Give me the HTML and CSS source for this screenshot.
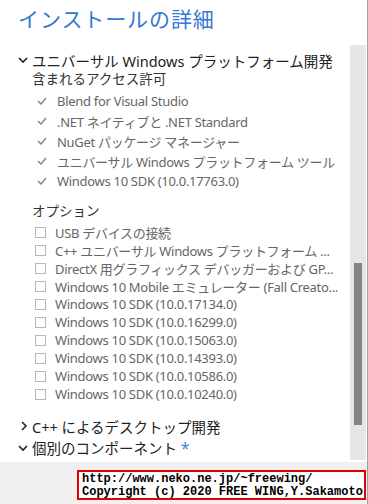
FILE: index.html
```html
<!DOCTYPE html>
<html lang="ja">
<head>
<meta charset="utf-8">
<link rel="stylesheet" href="styles.css">
</head>
<body>
<div class="window">
  <div class="main">
    <div class="content">
      <h1 class="title">インストールの詳細</h1>
      <div class="group">
        <div class="heading">
          <svg class="chev" width="10" height="8" viewBox="0 0 10 8"><path d="M1 2 L5 6 L9 2" fill="none" stroke="#222" stroke-width="1.6"/></svg>
          <span>ユニバーサル Windows プラットフォーム開発</span>
        </div>
        <div class="sub">含まれるアクセス許可</div>
        <ul class="checks">
          <li><svg class="tick" width="10" height="8" viewBox="0 0 10 8"><path d="M1 4 L4 7 L9 1" fill="none" stroke="#888" stroke-width="1.5"/></svg>Blend for Visual Studio</li>
          <li><svg class="tick" width="10" height="8" viewBox="0 0 10 8"><path d="M1 4 L4 7 L9 1" fill="none" stroke="#888" stroke-width="1.5"/></svg>.NET ネイティブと .NET Standard</li>
          <li><svg class="tick" width="10" height="8" viewBox="0 0 10 8"><path d="M1 4 L4 7 L9 1" fill="none" stroke="#888" stroke-width="1.5"/></svg>NuGet パッケージ マネージャー</li>
          <li><svg class="tick" width="10" height="8" viewBox="0 0 10 8"><path d="M1 4 L4 7 L9 1" fill="none" stroke="#888" stroke-width="1.5"/></svg>ユニバーサル Windows プラットフォーム ツール</li>
          <li><svg class="tick" width="10" height="8" viewBox="0 0 10 8"><path d="M1 4 L4 7 L9 1" fill="none" stroke="#888" stroke-width="1.5"/></svg>Windows 10 SDK (10.0.17763.0)</li>
        </ul>
        <div class="sub opt">オプション</div>
        <ul class="options">
          <li><span class="box"></span>USB デバイスの接続</li>
          <li><span class="box"></span>C++ ユニバーサル Windows プラットフォーム ...</li>
          <li><span class="box"></span>DirectX 用グラフィックス デバッガーおよび GP...</li>
          <li><span class="box"></span>Windows 10 Mobile エミュレーター (Fall Creato...</li>
          <li><span class="box"></span>Windows 10 SDK (10.0.17134.0)</li>
          <li><span class="box"></span>Windows 10 SDK (10.0.16299.0)</li>
          <li><span class="box"></span>Windows 10 SDK (10.0.15063.0)</li>
          <li><span class="box"></span>Windows 10 SDK (10.0.14393.0)</li>
          <li><span class="box"></span>Windows 10 SDK (10.0.10586.0)</li>
          <li><span class="box"></span>Windows 10 SDK (10.0.10240.0)</li>
        </ul>
      </div>
      <div class="heading h-cpp">
        <svg class="chev" width="10" height="10" viewBox="0 0 10 10"><path d="M3 1 L7 5 L3 9" fill="none" stroke="#222" stroke-width="1.6"/></svg>
        <span>C++ によるデスクトップ開発</span>
      </div>
      <div class="heading h-ind">
        <svg class="chev" width="10" height="8" viewBox="0 0 10 8"><path d="M1 2 L5 6 L9 2" fill="none" stroke="#222" stroke-width="1.6"/></svg>
        <span>個別のコンポーネント <span class="star">*</span></span>
      </div>
      <div class="peek"></div>
    </div>
    <div class="scroll">
      <div class="track">
        <div class="thumb"></div>
      </div>
    </div>
  </div>
  <div class="footer">
    <div class="credit">http://www.neko.ne.jp/~freewing/<br>Copyright (c) 2020 FREE WING,Y.Sakamoto</div>
  </div>
</div>
</body>
</html>
```
FILE: styles.css
```css
* { box-sizing: border-box; }
html, body { margin: 0; padding: 0; background: #fff; }
body {
  width: 368px;
  height: 504px;
  overflow: hidden;
  font-family: "Noto Sans", "Noto Sans CJK JP", sans-serif;
  color: #222;
}
.window {
  display: flex;
  flex-direction: column;
  height: 504px;
  border-right: 1px solid #a0a0a0;
}
.main {
  display: flex;
  height: 462px;
  overflow: hidden;
}
.content {
  width: 350px;
  padding-left: 18px;
  overflow: hidden;
}
.title {
  margin: 0;
  padding-top: 3px;
  font-family: "Noto Sans CJK JP", sans-serif;
  font-weight: 400;
  font-size: 21px;
  line-height: 30px;
  color: #3577d4;
  letter-spacing: 0.9px;
}
.group { margin-top: 17px; }
.heading {
  display: flex;
  align-items: center;
  height: 20px;
  font-size: 14.5px;
  color: #222;
  white-space: nowrap;
}
.heading .chev { width: 10px; margin-right: 4px; flex: none; }
.sub {
  height: 18px;
  line-height: 18px;
  font-size: 13.5px;
  padding-left: 14px;
  color: #333;
  white-space: nowrap;
}
ul { list-style: none; margin: 0; padding: 0; }
.checks { margin-top: 3px; padding-left: 19px; }
.checks li {
  display: flex;
  align-items: center;
  height: 20px;
  font-size: 13px;
  letter-spacing: -0.3px;
  color: #666;
  white-space: nowrap;
}
.tick { margin-right: 10px; flex: none; }
.sub.opt { margin-top: 11px; }
.options { margin-top: 3px; padding-left: 17px; }
.options li {
  display: flex;
  align-items: center;
  height: 18px;
  font-size: 13px;
  letter-spacing: -0.3px;
  color: #666;
  white-space: nowrap;
  overflow: hidden;
}
.box {
  width: 11px;
  height: 11px;
  border: 1px solid #b8b8b8;
  margin-right: 9px;
  flex: none;
}
.h-cpp { margin-top: 12px; height: 22px; }
.h-cpp .chev { margin-left: 1px; margin-right: 3px; }
.h-ind { height: 22px; }
.star { color: #3a86e6; font-size: 16px; }
.peek {
  margin-left: 20px;
  margin-top: 3px;
  width: 8px;
  height: 2px;
  background: #4a90e2;
}
.scroll {
  width: 17px;
  padding-top: 45px;
}
.track {
  width: 16px;
  height: 415px;
  background: #e6e6e6;
  padding-top: 218px;
  padding-left: 4px;
}
.thumb {
  width: 8px;
  height: 162px;
  background: #858585;
}
.footer {
  flex: 1;
  background: #f0f0f0;
  display: flex;
  justify-content: flex-end;
  align-items: flex-start;
  padding-top: 8px;
  padding-right: 1px;
}
.credit {
  width: 289px;
  border: 2px solid #e00000;
  background: #fff;
  font-family: "Liberation Mono", monospace;
  font-weight: bold;
  font-size: 12px;
  line-height: 13px;
  color: #000;
  padding: 1px 0 0 3px;
  height: 30px;
  white-space: nowrap;
}
```
